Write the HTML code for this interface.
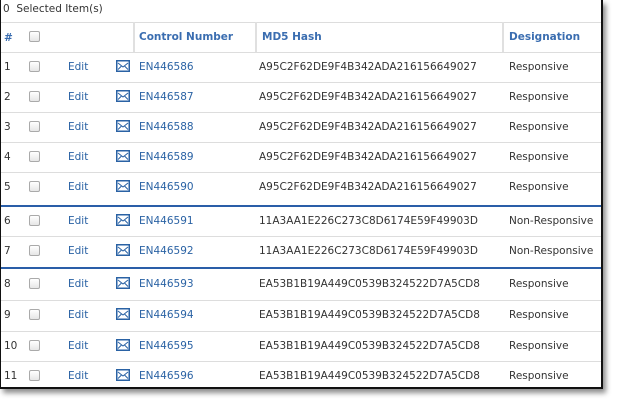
<html><head><style>
body{margin:0;width:617px;height:405px;background:#fff;position:relative;overflow:hidden;font-family:"DejaVu Sans","Liberation Sans",sans-serif;font-size:10.5px;color:#333}
.frame{position:absolute;left:0;top:0;width:600px;height:387px;border-left:1px solid #111;border-right:2px solid #111;border-bottom:2px solid #111;box-shadow:3px 4px 5px rgba(0,0,0,.45);background:#fff;overflow:hidden}
.t{position:absolute;white-space:nowrap}
.hl{position:absolute;left:0;width:600px;height:1px;background:#ddd}
.vl{position:absolute;top:22px;height:30px;width:2px;background:#e0e0e0}
.cb{position:absolute;left:28px;width:11px;height:11px;border:1px solid #aaa;border-radius:2px;background:linear-gradient(#fff,#e6e6e6);box-sizing:border-box}
.b{color:#2a62a4}
.h{font-weight:bold;color:#3a6db0}
svg{position:absolute;left:115px}
</style></head><body><div class="frame">
<div class="t" style="left:2px;top:3px">0&nbsp; Selected Item(s)</div>
<div class="hl" style="top:22px"></div><div class="hl" style="top:52px"></div>
<div class="vl" style="left:132px"></div><div class="vl" style="left:254px"></div><div class="vl" style="left:501px"></div>
<div class="t h" style="left:3px;top:32px">#</div>
<div class="cb" style="top:31px"></div>
<div class="t h" style="left:138px;top:31px">Control Number</div>
<div class="t h" style="left:261px;top:31px">MD5 Hash</div>
<div class="t h" style="left:508px;top:31px">Designation</div>
<div id="rows"></div>
</div>
<script>
var ys=[67,97,127,157,187,221,251,284,315,346,376],h='';
var md=["A95C2F62DE9F4B342ADA216156649027","11A3AA1E226C273C8D6174E59F49903D","EA53B1B19A449C0539B324522D7A5CD8"];
for(var i=0;i<11;i++){var y=ys[i],g=i<5?0:i<7?1:2;
h+='<div class="t" style="left:3px;top:'+(y-6)+'px">'+(i+1)+'</div><div class="cb" style="top:'+(y-6)+'px"></div>'+
'<div class="t b" style="left:67px;top:'+(y-6)+'px">Edit</div>'+
'<svg style="top:'+(y-7)+'px" width="14" height="12" viewBox="0 0 14 12"><rect x="0.75" y="0.75" width="12.5" height="10.5" fill="#fff" stroke="#2a62a4" stroke-width="1.5"/><path d="M2 3L7 7L12 3M2 9.5L5.5 6M12 9.5L8.5 6" fill="none" stroke="#2a62a4" stroke-width="1"/></svg>'+
'<div class="t b" style="left:138px;top:'+(y-6)+'px">EN4465'+(86+i)+'</div>'+
'<div class="t" style="left:258px;top:'+(y-6)+'px">'+md[g]+'</div>'+
'<div class="t" style="left:508px;top:'+(y-6)+'px">'+(g==1?'Non-Responsive':'Responsive')+'</div>';
if(i<10){var ly=i==4?205:i==6?267:Math.round((y+ys[i+1])/2);
h+='<div class="hl" style="top:'+ly+'px;'+((i==4||i==6)?'height:2px;background:#2a5ea8':'')+'"></div>';}}
document.getElementById('rows').innerHTML=h;
</script></body></html>
